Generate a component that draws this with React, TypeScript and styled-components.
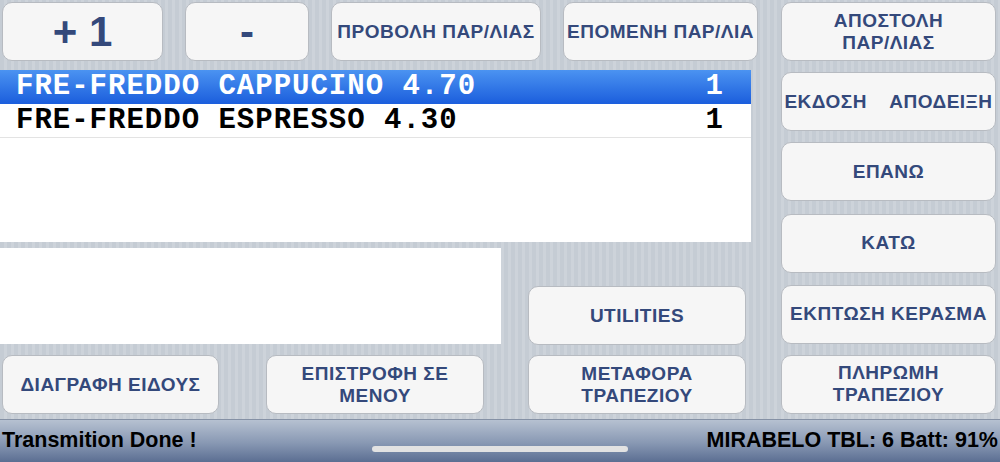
import styled, { createGlobalStyle } from "styled-components";

const GlobalStyle = createGlobalStyle`
  html, body {
    margin: 0;
    padding: 0;
  }
  body {
    width: 1000px;
    height: 462px;
    overflow: hidden;
    font-family: "Liberation Sans", Arial, sans-serif;
  }
`;

const Screen = styled.div`
  width: 1000px;
  height: 462px;
  display: flex;
  flex-direction: column;
  position: relative;
  background: repeating-linear-gradient(
    90deg,
    #c5ccd4 0px,
    #c5ccd4 4px,
    #cdd3da 4px,
    #cdd3da 7px
  );
`;

const Content = styled.div`
  height: 419px;
  display: flex;
  box-sizing: border-box;
  padding-top: 2px;
`;

const LeftPane = styled.div`
  width: 758px;
  display: flex;
  flex-direction: column;
`;

const TopRow = styled.div`
  display: flex;
  justify-content: space-between;
  padding-left: 2px;
  height: 59px;
`;

const Button = styled.div<{ $w?: number; $big?: boolean }>`
  box-sizing: border-box;
  width: ${(p) => (p.$w ? `${p.$w}px` : "100%")};
  height: 59px;
  flex-shrink: 0;
  display: flex;
  align-items: center;
  justify-content: center;
  text-align: center;
  white-space: pre;
  background: #f6f6f6;
  border: 1px solid #b7bbc1;
  border-radius: 10px;
  color: #34497b;
  font-weight: bold;
  font-size: ${(p) => (p.$big ? "42px" : "19px")};
  letter-spacing: ${(p) => (p.$big ? "0" : "0.5px")};
  line-height: 22px;
`;

const List = styled.div`
  margin-top: 9px;
  width: 751px;
  height: 172px;
  background: #ffffff;
  display: flex;
  flex-direction: column;
`;

const Row = styled.div<{ $selected?: boolean }>`
  height: 34px;
  box-sizing: border-box;
  display: flex;
  align-items: center;
  justify-content: space-between;
  padding: 0 27px 0 16px;
  font-family: "Liberation Mono", "Courier New", monospace;
  font-weight: bold;
  font-size: 29px;
  letter-spacing: 1px;
  color: ${(p) => (p.$selected ? "#ffffff" : "#000000")};
  background: ${(p) =>
    p.$selected ? "linear-gradient(#4b93f1, #1c5fdd)" : "#ffffff"};
  border-bottom: 1px solid ${(p) => (p.$selected ? "#1c5fdd" : "#e3e3e3")};
`;

const Lower = styled.div`
  margin-top: 6px;
  display: flex;
  height: 166px;
`;

const LowerLeft = styled.div`
  width: 501px;
  display: flex;
  flex-direction: column;
  justify-content: space-between;
`;

const NoteBox = styled.div`
  width: 501px;
  height: 96px;
  background: #ffffff;
`;

const BottomPair = styled.div`
  display: flex;
  padding-left: 2px;
  gap: 47px;
`;

const LowerRight = styled.div`
  margin-left: 27px;
  display: flex;
  flex-direction: column;
  justify-content: flex-end;
  gap: 10px;
`;

const RightColumn = styled.div`
  margin-left: 23px;
  width: 215px;
  height: 412px;
  display: grid;
  grid-template-rows: 59px 59px 60px 60px 59px 59px;
  align-content: space-between;
`;

const StatusBar = styled.div`
  height: 43px;
  box-sizing: border-box;
  border-top: 1px solid #8591a5;
  background: linear-gradient(#b6c1d1, #8898b3 55%, #5b6e92);
  display: flex;
  align-items: flex-start;
  justify-content: space-between;
  padding: 8px 2px 0 2px;
  font-weight: bold;
  font-size: 21.5px;
  color: #000000;
`;

const HomeIndicator = styled.div`
  position: absolute;
  left: 372px;
  top: 446px;
  width: 256px;
  height: 6px;
  border-radius: 3px;
  background: #e2e2e2;
`;

const items = [
  { name: "FRE-FREDDO CAPPUCINO 4.70", qty: 1, selected: true },
  { name: "FRE-FREDDO ESPRESSO 4.30", qty: 1, selected: false },
];

export default function App() {
  return (
    <>
      <GlobalStyle />
      <Screen>
        <Content>
          <LeftPane>
            <TopRow>
              <Button $w={161} $big>
                {"+ 1"}
              </Button>
              <Button $w={124} $big>
                -
              </Button>
              <Button $w={210}>ΠΡΟΒΟΛΗ ΠΑΡ/ΛΙΑΣ</Button>
              <Button $w={195}>ΕΠΟΜΕΝΗ ΠΑΡ/ΛΙΑ</Button>
            </TopRow>
            <List>
              {items.map((it) => (
                <Row key={it.name} $selected={it.selected}>
                  <span>{it.name}</span>
                  <span>{it.qty}</span>
                </Row>
              ))}
            </List>
            <Lower>
              <LowerLeft>
                <NoteBox />
                <BottomPair>
                  <Button $w={217}>ΔΙΑΓΡΑΦΗ ΕΙΔΟΥΣ</Button>
                  <Button $w={218}>{"ΕΠΙΣΤΡΟΦΗ ΣΕ\nΜΕΝΟΥ"}</Button>
                </BottomPair>
              </LowerLeft>
              <LowerRight>
                <Button $w={218}>UTILITIES</Button>
                <Button $w={218}>{"ΜΕΤΑΦΟΡΑ\nΤΡΑΠΕΖΙΟΥ"}</Button>
              </LowerRight>
            </Lower>
          </LeftPane>
          <RightColumn>
            <Button>{"ΑΠΟΣΤΟΛΗ\nΠΑΡ/ΛΙΑΣ"}</Button>
            <Button>{"ΕΚΔΟΣΗ    ΑΠΟΔΕΙΞΗ"}</Button>
            <Button>ΕΠΑΝΩ</Button>
            <Button>ΚΑΤΩ</Button>
            <Button>ΕΚΠΤΩΣΗ ΚΕΡΑΣΜΑ</Button>
            <Button>{"ΠΛΗΡΩΜΗ\nΤΡΑΠΕΖΙΟΥ"}</Button>
          </RightColumn>
        </Content>
        <StatusBar>
          <span>Transmition Done !</span>
          <span>MIRABELO TBL: 6 Batt: 91%</span>
        </StatusBar>
        <HomeIndicator />
      </Screen>
    </>
  );
}
